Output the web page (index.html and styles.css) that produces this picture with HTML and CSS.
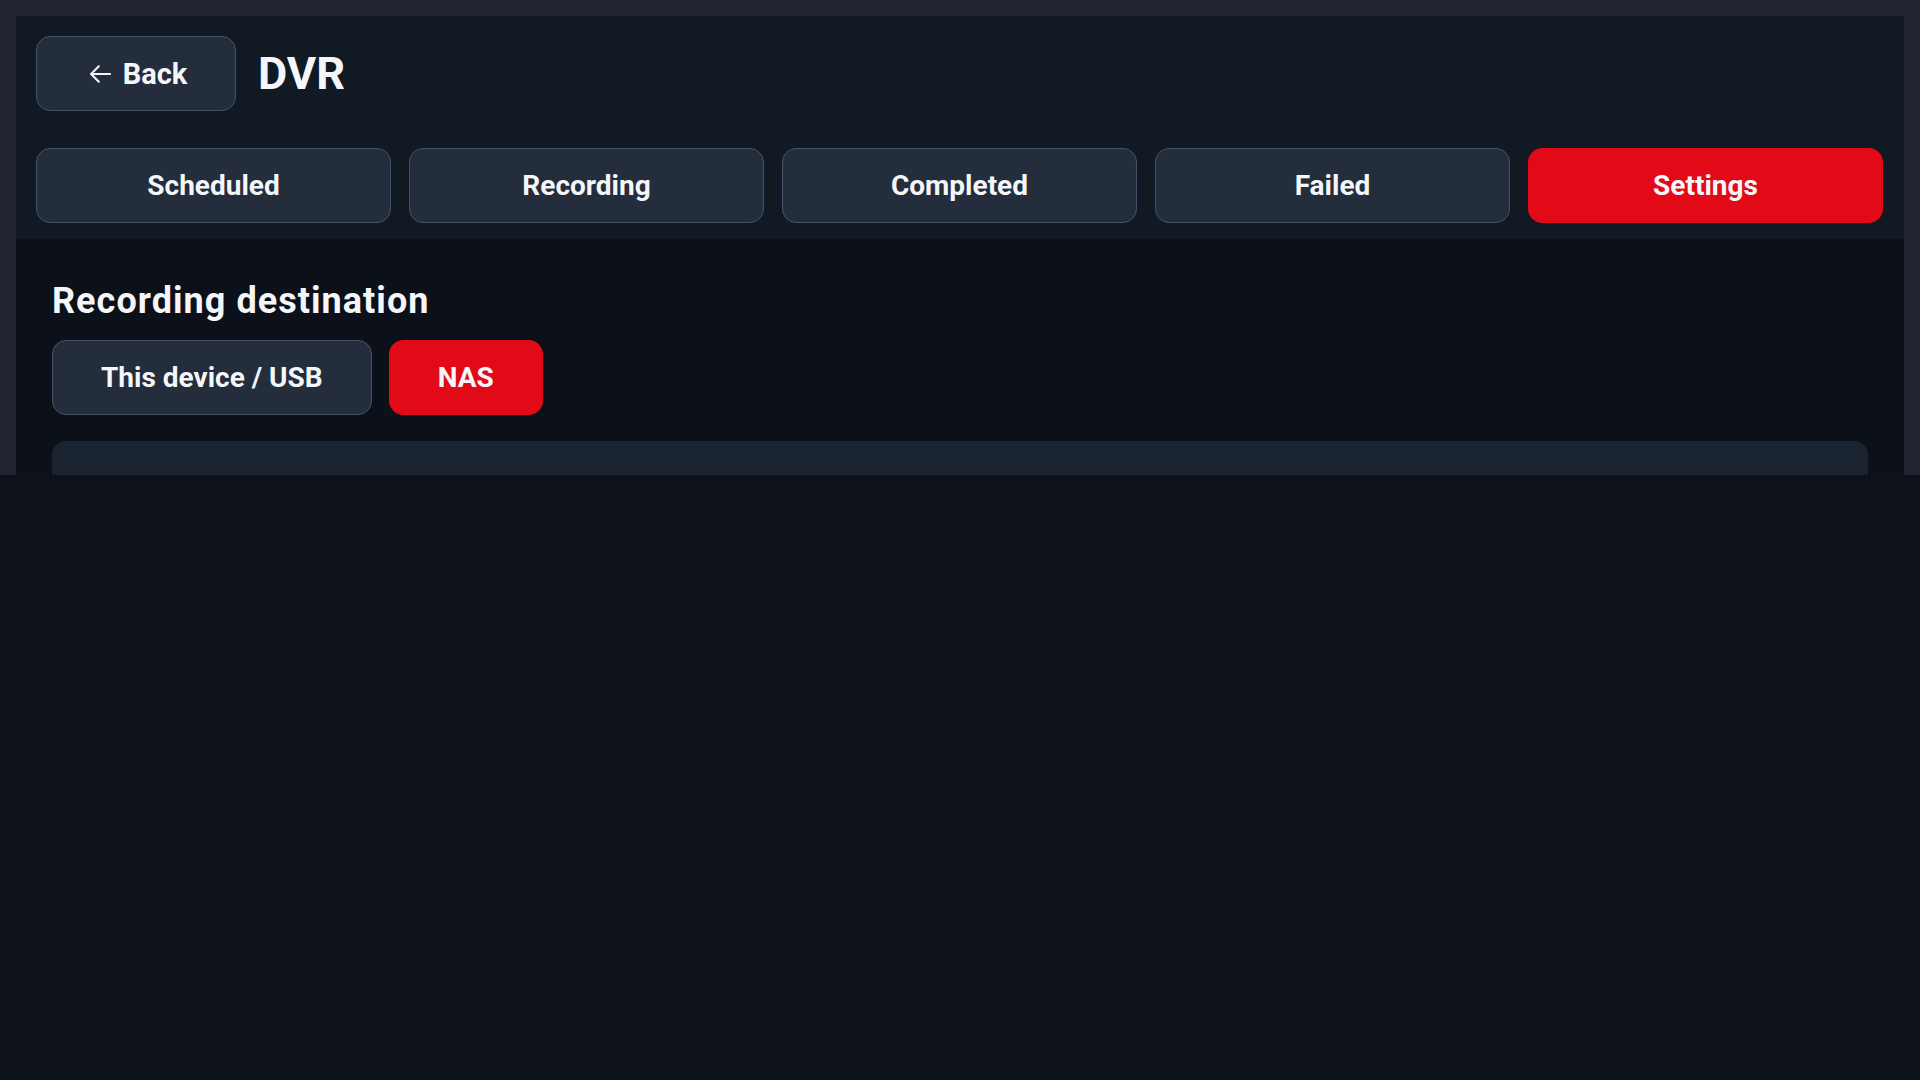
FILE: index.html
```html
<!DOCTYPE html>
<html lang="en">
<head>
<meta charset="utf-8">
<title>DVR</title>
<link rel="stylesheet" href="styles.css">
</head>
<body>
<div class="app">
  <header class="header">
    <div class="top-row">
      <button class="btn back-btn">
        <svg class="back-icon" viewBox="0 0 22 20" width="22" height="20" aria-hidden="true">
          <path d="M21 10H2.5M9.8 2.3L2.1 10 9.8 17.7" fill="none" stroke="currentColor" stroke-width="2.1" stroke-linecap="round" stroke-linejoin="round"/>
        </svg>
        <span>Back</span>
      </button>
      <h1 class="title">DVR</h1>
    </div>
    <nav class="tabs">
      <button class="btn tab">Scheduled</button>
      <button class="btn tab">Recording</button>
      <button class="btn tab">Completed</button>
      <button class="btn tab">Failed</button>
      <button class="btn tab active">Settings</button>
    </nav>
  </header>
  <main class="content">
    <h2 class="section-title">Recording destination</h2>
    <div class="options">
      <button class="btn option">This device / USB</button>
      <button class="btn option active">NAS</button>
    </div>
    <div class="card"></div>
  </main>
</div>
</body>
</html>
```

FILE: styles.css
```css
* {
  box-sizing: border-box;
}

html, body {
  margin: 0;
  padding: 0;
  background: #0d111a;
  font-family: Roboto, "Liberation Sans", Arial, sans-serif;
  color: #f4f6f9;
}

.app {
  height: 475px;
  background: #1f2430;
  padding: 16px 16px 0 16px;
  display: flex;
  flex-direction: column;
  overflow: hidden;
}

.header {
  background: #111923;
  padding: 20px 21px 16px 20px;
  display: flex;
  flex-direction: column;
  gap: 37px;
}

.top-row {
  display: flex;
  align-items: center;
  gap: 22px;
}

.btn {
  font-family: inherit;
  font-weight: 700;
  font-size: 28px;
  color: #f4f6f9;
  background: #232d3c;
  border: 1.5px solid #455267;
  border-radius: 14px;
  height: 75px;
  display: flex;
  align-items: center;
  justify-content: center;
  cursor: pointer;
  padding: 0;
}

.btn.active {
  background: #e30a17;
  border-color: #e30a17;
}

.back-btn {
  width: 200px;
  gap: 12px;
  font-size: 29px;
  padding-left: 4px;
}

.back-icon {
  width: 22px;
  height: 20px;
  color: #f4f6f9;
}

.title {
  margin: 0;
  font-size: 45px;
  font-weight: 700;
  line-height: 1;
}

.tabs {
  display: grid;
  grid-template-columns: repeat(5, 1fr);
  gap: 18px;
}

.tab {
  width: 100%;
}

.content {
  flex: 1;
  background: #0c1119;
  padding: 41px 36px 0 36px;
  overflow: hidden;
}

.section-title {
  margin: 0;
  font-size: 36px;
  font-weight: 700;
  line-height: 1.2;
  letter-spacing: 1.05px;
}

.options {
  display: flex;
  gap: 17px;
  margin-top: 17px;
}

.option {
  padding: 0 48px;
}

.card {
  margin-top: 26px;
  height: 300px;
  background: #1a2431;
  border-radius: 14px;
}
```
